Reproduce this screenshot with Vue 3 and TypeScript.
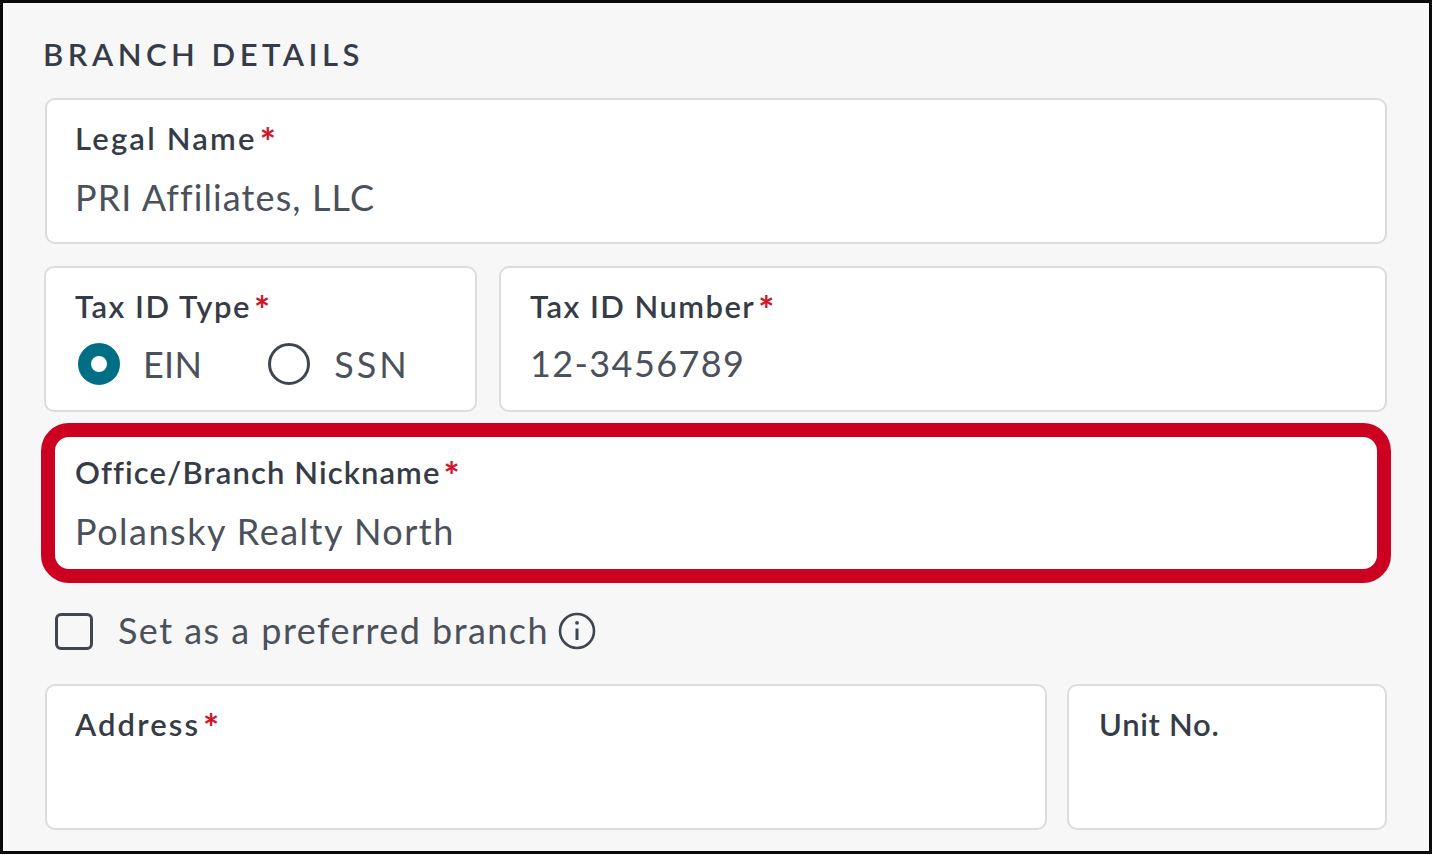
<script setup lang="ts">
const unused = null
</script>

<template>
  <div class="frame">
    <h2 class="title">BRANCH DETAILS</h2>

    <div class="card legal">
      <div class="label ls-legal">Legal Name<span class="req">*</span></div>
      <div class="value val-legal">PRI Affiliates, LLC</div>
    </div>

    <div class="row tax">
      <div class="card type">
        <div class="label ls-type">Tax ID Type<span class="req">*</span></div>
        <div class="radios">
          <span class="radio on"></span><span class="value opt ein">EIN</span>
          <span class="radio"></span><span class="value opt ssn">SSN</span>
        </div>
      </div>
      <div class="card number">
        <div class="label ls-number">Tax ID Number<span class="req">*</span></div>
        <div class="value num">12-3456789</div>
      </div>
    </div>

    <div class="card nick">
      <div class="label ls-nick">Office/Branch Nickname<span class="req">*</span></div>
      <div class="value val-nick">Polansky Realty North</div>
    </div>

    <div class="pref">
      <span class="check"></span>
      <span class="value preftext">Set as a preferred branch</span>
      <svg class="info" viewBox="0 0 38 38" fill="none" stroke="#3f4650" stroke-width="2.6">
        <circle cx="19" cy="19" r="17" />
        <path d="M19 16.5V28" stroke-width="3" />
        <circle cx="19" cy="10.8" r="1.9" fill="#3f4650" stroke="none" />
      </svg>
    </div>

    <div class="row addr">
      <div class="card address">
        <div class="label ls-addr">Address<span class="req">*</span></div>
      </div>
      <div class="card unit">
        <div class="label ls-unit">Unit No.</div>
      </div>
    </div>
  </div>
</template>

<style scoped>
.frame {
  width: 1432px;
  height: 854px;
  box-sizing: border-box;
  border: 3px solid #0a0a0a;
  background: #f7f7f7;
  padding: 35px 42px 0 41px;
  font-family: Lato, "Noto Sans", sans-serif;
  display: flex;
  flex-direction: column;
}
.title {
  margin: 0 0 0 -1px;
  font-size: 31px;
  line-height: 32px;
  height: 32px;
  font-weight: 600;
  letter-spacing: 4.5px;
  color: #363c47;
  white-space: nowrap;
}
.card {
  box-sizing: border-box;
  height: 146px;
  background: #fff;
  border: 2px solid #dcdcdc;
  border-radius: 10px;
  padding: 20px 28px 0;
}
.legal {
  margin: 28px 0 0 1px;
}
.label {
  font-size: 31px;
  line-height: 36px;
  font-weight: 600;
  color: #363c47;
  white-space: nowrap;
}
.ls-legal { letter-spacing: 2.2px; }
.ls-type { letter-spacing: 1.5px; }
.ls-number { letter-spacing: 1.45px; }
.ls-nick { letter-spacing: 1.1px; }
.ls-addr { letter-spacing: 2.1px; }
.ls-unit { letter-spacing: 0.7px; }
.req {
  color: #d0152b;
  margin-left: 3px;
  font-size: 38px;
  font-weight: 700;
  line-height: 0;
  position: relative;
  top: 6px;
  letter-spacing: 0;
}
.value {
  font-size: 36px;
  line-height: 44px;
  color: #4b515b;
  margin-top: 19px;
  white-space: nowrap;
  letter-spacing: 1.3px;
}
.val-legal { letter-spacing: 1.1px; }
.val-nick { letter-spacing: 1.5px; }
.row {
  display: flex;
}
.tax {
  margin-top: 22px;
  gap: 22px;
}
.type {
  width: 433px;
  padding-left: 29px;
}
.number {
  flex: 1;
  padding-left: 29px;
}
.radios {
  display: flex;
  align-items: center;
  margin-top: 18px;
}
.radio {
  box-sizing: border-box;
  width: 42px;
  height: 42px;
  border: 3px solid #3f4650;
  border-radius: 50%;
  background: #fff;
}
.radio.on {
  border: 13px solid #006f85;
  margin-left: 3px;
}
.opt {
  margin: 0 0 0 23px;
}
.ein {
  margin-right: 66px;
  letter-spacing: 0.3px;
}
.ssn {
  margin-left: 24px;
  letter-spacing: 2.9px;
}
.num {
  margin-top: 17px;
  letter-spacing: 1.4px;
}
.nick {
  height: 160px;
  margin: 11px -4px 0 -3px;
  border: 14px solid #cc0020;
  border-radius: 28px;
  padding: 17px 20px 0;
  background: #fff;
}
.pref {
  display: flex;
  align-items: center;
  margin: 29px 0 0 11px;
  height: 38px;
}
.check {
  box-sizing: border-box;
  width: 38px;
  height: 37px;
  border: 3px solid #3f4650;
  border-radius: 6px;
}
.preftext {
  margin: -2px 0 0 25px;
  letter-spacing: 1.45px;
}
.info {
  width: 38px;
  height: 38px;
  margin-left: 9px;
}
.addr {
  margin: 34px 0 0 1px;
  gap: 20px;
}
.address {
  width: 1002px;
}
.unit {
  flex: 1;
  padding-left: 30px;
}
</style>
<style>
html, body {
  background: #fff;
}
</style>
